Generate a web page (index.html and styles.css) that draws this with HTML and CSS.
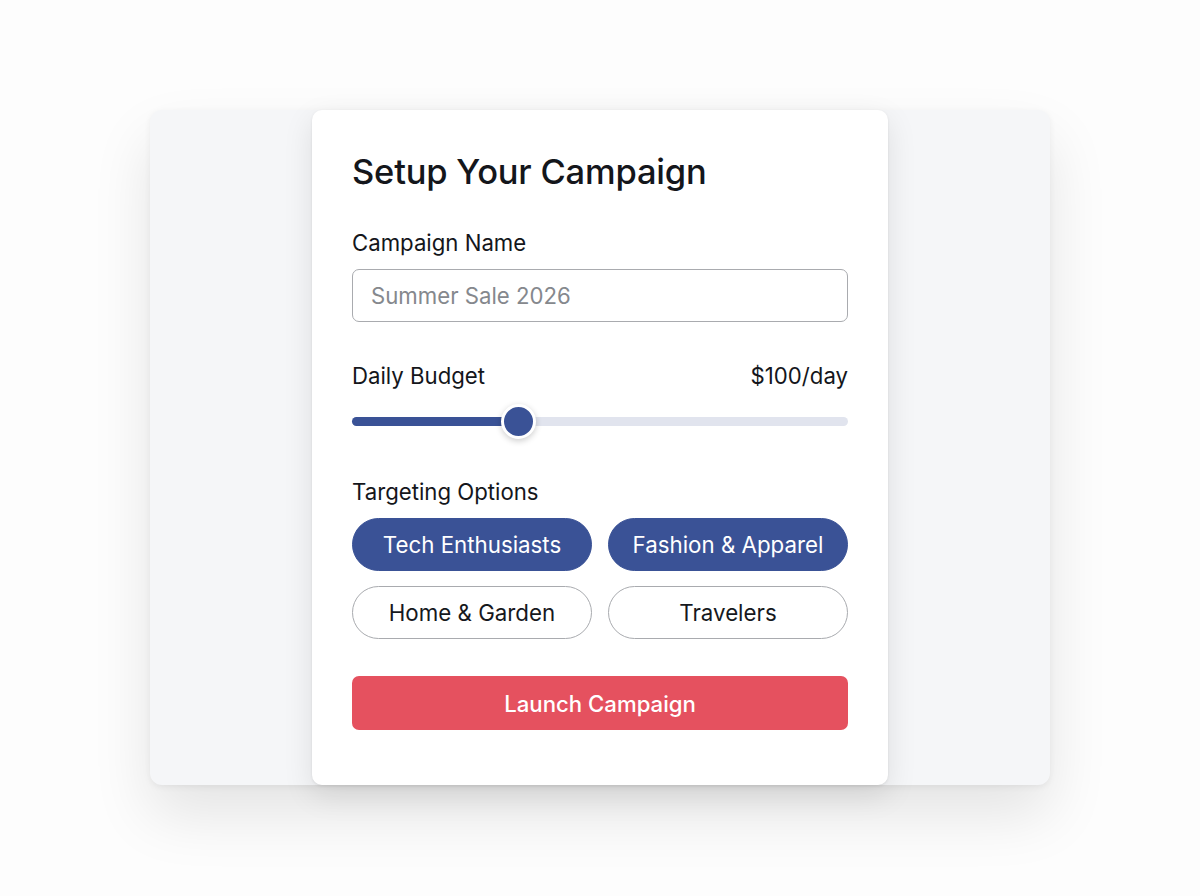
FILE: index.html
```html
<!DOCTYPE html>
<html lang="en">
<head>
<meta charset="utf-8">
<link rel="stylesheet" href="styles.css">
</head>
<body>
<div class="stage">
  <div class="panel">
    <div class="card">
      <h1 class="title">Setup Your Campaign</h1>
      <div class="field">
        <label class="label">Campaign Name</label>
        <div class="input">Summer Sale 2026</div>
      </div>
      <div class="field budget">
        <div class="row">
          <span class="label">Daily Budget</span>
          <span class="value">$100/day</span>
        </div>
        <div class="slider">
          <div class="fill"></div>
          <div class="thumb"></div>
        </div>
      </div>
      <div class="field targeting">
        <span class="label">Targeting Options</span>
        <div class="chips">
          <div class="chip on">Tech Enthusiasts</div>
          <div class="chip on">Fashion &amp; Apparel</div>
          <div class="chip">Home &amp; Garden</div>
          <div class="chip">Travelers</div>
        </div>
      </div>
      <div class="launch">Launch Campaign</div>
    </div>
  </div>
</div>
</body>
</html>
```
FILE: styles.css
```css
* { box-sizing: border-box; }
html, body { margin: 0; padding: 0; }
body {
  width: 1200px;
  height: 896px;
  background: #fdfdfd;
  font-family: Inter, "Noto Sans", sans-serif;
  color: #16181d;
  overflow: hidden;
}
.stage {
  padding-top: 110px;
  display: flex;
  justify-content: center;
}
.panel {
  width: 900px;
  height: 675px;
  background: #f5f6f8;
  border-radius: 12px;
  box-shadow: 0 30px 60px rgba(0,0,0,0.10), 0 2px 6px rgba(0,0,0,0.06);
  display: flex;
  justify-content: center;
}
.card {
  width: 576px;
  height: 675px;
  background: #ffffff;
  border-radius: 10px;
  box-shadow: 0 10px 30px rgba(0,0,0,0.10), 0 1px 3px rgba(0,0,0,0.08);
  padding: 40px 40px 0;
  display: flex;
  flex-direction: column;
}
.title {
  margin: 0;
  font-size: 34.5px;
  font-weight: 500;
  line-height: 44px;
  letter-spacing: -0.2px;
  color: #14161b;
}
.label {
  font-size: 22.2px;
  font-weight: 400;
  line-height: 26px;
  color: #14161b;
  display: block;
}
.field { margin-top: 36px; }
.field .input {
  margin-top: 13px;
  height: 53px;
  border: 1.5px solid #a9abaf;
  border-radius: 7px;
  padding-left: 18px;
  display: flex;
  align-items: center;
  font-size: 22.2px;
  color: #85888d;
}
.budget { margin-top: 41px; }
.row {
  display: flex;
  justify-content: space-between;
  align-items: center;
}
.value { font-size: 22.2px; color: #14161b; line-height: 26px; }
.slider {
  position: relative;
  margin-top: 28px;
  height: 9px;
  border-radius: 5px;
  background: #e1e4ee;
}
.fill {
  width: 166px;
  height: 9px;
  border-radius: 5px;
  background: #3a5296;
}
.thumb {
  position: absolute;
  left: 149px;
  top: -13px;
  width: 35px;
  height: 35px;
  border-radius: 50%;
  background: #3a5296;
  border: 3px solid #ffffff;
  box-shadow: 0 2px 6px rgba(0,0,0,0.2);
}
.targeting { margin-top: 53px; }
.chips {
  margin-top: 13px;
  display: grid;
  grid-template-columns: 1fr 1fr;
  column-gap: 16px;
  row-gap: 15px;
}
.chip {
  height: 53px;
  border-radius: 27px;
  border: 1.5px solid #a9abaf;
  display: flex;
  align-items: center;
  justify-content: center;
  font-size: 22.3px;
  color: #16181d;
  background: #fff;
}
.chip.on {
  background: #3a5296;
  border-color: #3a5296;
  color: #ffffff;
}
.launch {
  margin-top: 37px;
  height: 54px;
  border-radius: 7px;
  background: #e5515f;
  color: #fff;
  display: flex;
  align-items: center;
  justify-content: center;
  font-size: 22.2px;
  font-weight: 500;
}
```
